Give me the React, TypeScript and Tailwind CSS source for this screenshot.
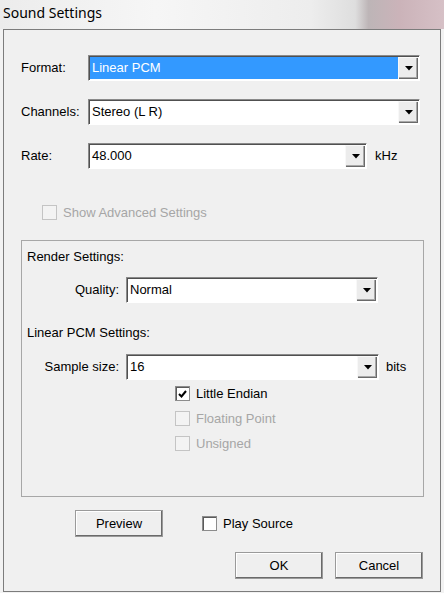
import React from "react";

const font = "font-['Liberation_Sans',Arial,sans-serif] text-[13px] leading-[16px]";

function DropArrow() {
  return (
    <div className="flex h-full w-[20px] shrink-0 items-center justify-center border-l border-t border-[#f8f8f8] bg-[#ececec] shadow-[inset_-1px_-1px_0_#6a6a6a,inset_-2px_-2px_0_#a8a8a8]">
      <svg width="8" height="5" viewBox="0 0 8 5">
        <path d="M0 0h8L4 4.5z" fill="#000" />
      </svg>
    </div>
  );
}

function Combo({
  value,
  width,
  selected = false,
}: {
  value: string;
  width: string;
  selected?: boolean;
}) {
  return (
    <div
      className={`flex h-[26px] ${width} shrink-0 border border-b-white border-l-[#8a8a8a] border-r-white border-t-[#8a8a8a] bg-white p-px shadow-[inset_1px_1px_0_#505050]`}
    >
      <div
        className={`flex min-w-0 flex-1 items-center pl-[2px] ${
          selected ? "bg-[#3399ff] text-white" : "text-black"
        }`}
      >
        {value}
      </div>
      <DropArrow />
    </div>
  );
}

function Check({
  label,
  checked = false,
  disabled = false,
}: {
  label: string;
  checked?: boolean;
  disabled?: boolean;
}) {
  return (
    <div className="flex h-[15px] items-center gap-[6px]">
      <div
        className={`flex h-[15px] w-[15px] shrink-0 items-center justify-center border ${
          disabled
            ? "border-[#c4c4c4] bg-[#f3f3f3]"
            : "border-[#8c8c8c] bg-white shadow-[inset_1px_1px_0_#5a5a5a]"
        }`}
      >
        {checked && (
          <svg width="9" height="8" viewBox="0 0 9 8">
            <path d="M1 4l2.5 2.5L8 1" stroke="#000" strokeWidth="2" fill="none" />
          </svg>
        )}
      </div>
      <span className={disabled ? "text-[#a6a6a6]" : "text-black"}>{label}</span>
    </div>
  );
}

function Button({ label }: { label: string }) {
  return (
    <div className="flex h-[27px] w-[88px] shrink-0 items-center justify-center border border-[#9a9a9a] bg-[#efefef] shadow-[inset_-1px_-1px_0_#6a6a6a,inset_1px_1px_0_#ffffff]">
      {label}
    </div>
  );
}

export default function App() {
  return (
    <div className={`h-[593px] w-[444px] overflow-hidden bg-[#f2f2f2] ${font}`}>
      {/* Window title bar */}
      <div className="flex h-[29px] items-start bg-[linear-gradient(90deg,#ececec_0%,#f6f6f6_35%,#ededed_70%,#dedede_80%,#bdb5b7_83%,#cbb3b9_90%,#d6c0c6_100%)] pl-[3px] pt-[3px] font-['Noto_Sans',sans-serif] text-[14px] leading-[20px] text-black">
        Sound Settings
      </div>

      {/* Dialog body */}
      <div className="ml-[3px] flex h-[563px] w-[438px] flex-col border border-[#7c7c7c] bg-[#f0f0f0]">
        <div className="mt-[25px] flex flex-col gap-[18px] pl-[17px]">
          <div className="flex items-center">
            <span className="w-[67px] shrink-0">Format:</span>
            <Combo value="Linear PCM" width="w-[332px]" selected />
          </div>
          <div className="flex items-center">
            <span className="w-[67px] shrink-0">Channels:</span>
            <Combo value="Stereo (L R)" width="w-[332px]" />
          </div>
          <div className="flex items-center">
            <span className="w-[67px] shrink-0">Rate:</span>
            <Combo value="48.000" width="w-[279px]" />
            <span className="ml-[8px]">kHz</span>
          </div>
        </div>

        <div className="mt-[36px] pl-[38px]">
          <Check label="Show Advanced Settings" disabled />
        </div>

        {/* Render / PCM group */}
        <div className="ml-[17px] mt-[20px] flex h-[257px] w-[403px] flex-col border border-[#a7a7a7] pl-[5px]">
          <div className="mt-[8px]">Render Settings:</div>
          <div className="mt-[12px] flex items-center">
            <span className="w-[92px] shrink-0 text-right">Quality:</span>
            <div className="ml-[7px]">
              <Combo value="Normal" width="w-[252px]" />
            </div>
          </div>
          <div className="mt-[22px]">Linear PCM Settings:</div>
          <div className="mt-[13px] flex items-center">
            <span className="w-[92px] shrink-0 text-right">Sample size:</span>
            <div className="ml-[7px]">
              <Combo value="16" width="w-[253px]" />
            </div>
            <span className="ml-[7px]">bits</span>
          </div>
          <div className="mt-[6px] flex flex-col gap-[10px] pl-[148px]">
            <Check label="Little Endian" checked />
            <Check label="Floating Point" disabled />
            <Check label="Unsigned" disabled />
          </div>
        </div>

        <div className="mt-[13px] flex items-center pl-[71px]">
          <Button label="Preview" />
          <div className="ml-[39px]">
            <Check label="Play Source" />
          </div>
        </div>

        <div className="mt-[15px] flex justify-end gap-[12px] pr-[17px]">
          <Button label="OK" />
          <Button label="Cancel" />
        </div>
      </div>
    </div>
  );
}
